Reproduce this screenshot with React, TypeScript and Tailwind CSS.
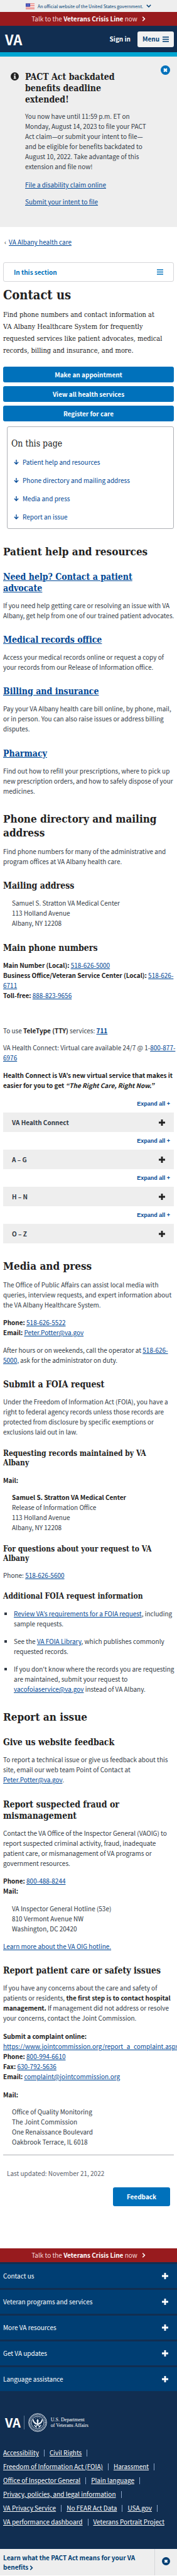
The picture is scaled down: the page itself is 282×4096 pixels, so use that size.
import type { ReactNode } from "react";

const SERIF = "font-['DejaVu_Serif_Condensed','DejaVu_Serif',serif]";

function A({ children, bold }: { children: ReactNode; bold?: boolean }) {
  return (
    <a href="#" className={bold ? "font-bold text-[#004795] underline" : "text-[#004795] underline"}>
      {children}
    </a>
  );
}

function H2({ children, id }: { children: ReactNode; id?: string }) {
  return (
    <h2 id={id} className={`mt-[25px] text-[17px] leading-[22px] font-bold text-[#212121] ${SERIF}`}>
      {children}
    </h2>
  );
}

function H3({ children, gap = "mt-[21px]" }: { children: ReactNode; gap?: string }) {
  return <h3 className={`${gap} text-[14px] leading-[18px] font-bold text-[#212121] ${SERIF}`}>{children}</h3>;
}

function H4({ children, gap = "mt-[19px]" }: { children: ReactNode; gap?: string }) {
  return <h4 className={`${gap} text-[12px] leading-[15px] font-bold text-[#212121] ${SERIF}`}>{children}</h4>;
}

function P({ children, gap = "mt-[11px]" }: { children: ReactNode; gap?: string }) {
  return <p className={`${gap} -mr-[5px]`}>{children}</p>;
}

function Address({ children, gap = "mt-[11px]" }: { children: ReactNode; gap?: string }) {
  return <address className={`${gap} ml-[14px] not-italic`}>{children}</address>;
}

function B({ children }: { children: ReactNode }) {
  return <strong className="font-bold text-[#212121]">{children}</strong>;
}

function Plus({ className }: { className: string }) {
  return (
    <svg viewBox="0 0 10 10" className={`h-[10px] w-[10px] shrink-0 ${className}`} aria-hidden="true">
      <path d="M3.6 0h2.8v3.6H10v2.8H6.4V10H3.6V6.4H0V3.6h3.6z" fill="currentColor" />
    </svg>
  );
}

function Bars({ className }: { className: string }) {
  return (
    <svg viewBox="0 0 10 9" className={`h-[9px] w-[10px] shrink-0 ${className}`} aria-hidden="true">
      <path d="M0 .3h10v1.4H0zM0 3.8h10v1.4H0zM0 7.3h10v1.4H0z" fill="currentColor" />
    </svg>
  );
}

function CloseCircle({ className }: { className: string }) {
  return (
    <svg viewBox="0 0 16 16" className={`shrink-0 ${className}`} aria-hidden="true">
      <circle cx="8" cy="8" r="8" fill="currentColor" />
      <path d="M5.4 5.4l5.2 5.2M10.6 5.4l-5.2 5.2" stroke="#fff" strokeWidth="2.6" />
    </svg>
  );
}

function Chevron({ className }: { className: string }) {
  return (
    <svg viewBox="0 0 6 8" className={`inline-block h-[8px] w-[6px] ${className}`} aria-hidden="true">
      <path d="M1.2 .8L4.4 4 1.2 7.2" fill="none" stroke="currentColor" strokeWidth="1.6" />
    </svg>
  );
}

function Flag() {
  return (
    <svg viewBox="0 0 20 13" className="h-[10px] w-[14px]" aria-hidden="true">
      <rect width="20" height="13" fill="#fff" />
      <path d="M0 0h20v1.6H0zM0 3.6h20v1.6H0zM0 7.4h20V9H0zM0 11.2h20V13H0z" fill="#e0524a" />
      <rect width="10" height="7.4" fill="#2c3fb0" />
      <path
        d="M1.5 1.6h1M4.5 1.6h1M7.5 1.6h1M3 3.6h1M6 3.6h1M1.5 5.6h1M4.5 5.6h1M7.5 5.6h1"
        stroke="#fff"
        strokeWidth="1"
      />
    </svg>
  );
}

function Seal() {
  return (
    <svg viewBox="0 0 60 60" className="h-[30px] w-[30px]" fill="none" stroke="#e8edf3" aria-hidden="true">
      <circle cx="30" cy="30" r="28.5" strokeWidth="2" />
      <circle cx="30" cy="30" r="24.5" strokeWidth="4" strokeDasharray="2 1.6" opacity=".7" />
      <circle cx="30" cy="30" r="20" strokeWidth="1.6" />
      <path d="M15 20c2 9 7 14 13 15M45 20c-2 9-7 14-13 15" strokeWidth="4" />
      <path d="M19 38l8 8M41 38l-8 8M22 44l16-14M38 44L22 30" strokeWidth="2.4" />
      <path d="M30 18l3 5-1 10-2 5-2-5-1-10z" fill="#e8edf3" stroke="none" />
      <path d="M23 17l2-2M29 14h2M35 15l2 2" strokeWidth="2" />
    </svg>
  );
}

function CrisisLine() {
  return (
    <a
      href="#"
      className="flex h-[22px] items-center justify-center gap-[7px] bg-[#981b1e] text-[10px] text-[#f5dcdc]"
    >
      <span>
        Talk to the <strong className="font-bold text-white">Veterans Crisis Line</strong> now
      </span>
      <Chevron className="text-white" />
    </a>
  );
}

function ActionLink({ children }: { children: ReactNode }) {
  return (
    <a
      href="#"
      className="flex h-[25px] items-center justify-center rounded-[3px] bg-[#0071bb] text-[10px] font-bold text-white"
    >
      {children}
    </a>
  );
}

function Accordion({ title }: { title: string }) {
  return (
    <div>
      <div className="flex h-[28px] items-center justify-end pr-[6px]">
        <button
          type="button"
          className="font-['Liberation_Sans',sans-serif] text-[9px] font-bold whitespace-nowrap text-[#004795]"
        >
          Expand all +
        </button>
      </div>
      <button
        type="button"
        className="flex h-[31px] w-full items-center justify-between bg-[#eeeeee] pr-[14px] pl-[14px] font-bold text-[#323a45]"
      >
        {title}
        <Plus className="text-[#212121]" />
      </button>
    </div>
  );
}

const pageLinks = [
  "Patient help and resources",
  "Phone directory and mailing address",
  "Media and press",
  "Report an issue",
];

const footerSections = [
  "Contact us",
  "Veteran programs and services",
  "More VA resources",
  "Get VA updates",
  "Language assistance",
];

const footerLinks = [
  "Accessibility",
  "Civil Rights",
  "Freedom of Information Act (FOIA)",
  "Harassment",
  "Office of Inspector General",
  "Plain language",
  "Privacy, policies, and legal information",
  "VA Privacy Service",
  "No FEAR Act Data",
  "USA.gov",
  "VA performance dashboard",
  "Veterans Portrait Project",
];

export default function App() {
  return (
    <div className="overflow-x-hidden bg-white font-['Noto_Sans_CJK_KR',sans-serif] text-[10px] leading-[16px] text-[#323a45]">
      <header>
        <button
          type="button"
          className="flex h-[19px] w-full items-center justify-center gap-[5px] bg-[#eeeeee] text-[7px] text-[#003e73]"
        >
          <Flag />
          An official website of the United States government.
          <svg viewBox="0 0 8 5" className="h-[5px] w-[8px]" aria-hidden="true">
            <path d="M.8 .8L4 4 7.2 .8" fill="none" stroke="currentColor" strokeWidth="1.5" />
          </svg>
        </button>
        <CrisisLine />
        <div className="flex h-[49px] items-center border-b-[7px] border-[#00a6d2] bg-[#112e51] pr-[5px] pl-[8px]">
          <a href="#" className="text-[22px] leading-[25px] font-bold text-white">
            VA
          </a>
          <button type="button" className="ml-auto font-bold text-white">
            Sign in
          </button>
          <button
            type="button"
            className="ml-[11px] flex h-[25px] w-[58px] items-center justify-center gap-[5px] rounded-[3px] bg-[#f1f1f1] font-bold text-[#003e73]"
          >
            Menu
            <Bars className="" />
          </button>
        </div>
      </header>

      <section className="flex items-start bg-[#eeeeee] pt-[14px] pr-[11px] pb-[32px] pl-[17px]">
        <svg viewBox="0 0 16 16" className="mt-[11px] h-[13px] w-[13px] shrink-0" aria-hidden="true">
          <circle cx="8" cy="8" r="8" fill="#212121" />
          <path d="M6.7 2.8h2.8v2.4H6.7zM6 6.4h3.5v4.4h1.1v1.8H5.8v-1.8h1.1V8.2H6z" fill="#eee" />
        </svg>
        <div className="mt-[9px] mr-[17px] ml-[10px] flex-1">
          <h2 className={`text-[14px] leading-[18px] font-bold text-[#212121] ${SERIF}`}>
            PACT Act backdated
            <br />
            benefits deadline
            <br />
            extended!
          </h2>
          <p className="mt-[10px]">
            You now have until 11:59 p.m. ET on Monday, August 14, 2023 to file your PACT Act claim—or submit your
            intent to file—and be eligible for benefits backdated to August 10, 2022. Take advantage of this extension
            and file now!
          </p>
          <P gap="mt-[13px]">
            <A>File a disability claim online</A>
          </P>
          <P>
            <A>Submit your intent to file</A>
          </P>
        </div>
        <button type="button" aria-label="Close" className="text-[#0071bb]">
          <CloseCircle className="h-[15px] w-[15px]" />
        </button>
      </section>

      <main className="px-[5px]">
        <nav className="mt-[16px] flex gap-[4px] pl-[2px]" aria-label="Breadcrumb">
          <span>‹</span>
          <A>VA Albany health care</A>
        </nav>
        <button
          type="button"
          className="mt-[24px] flex h-[31px] w-full items-center justify-between rounded-[3px] border border-[#d6d7d9] pr-[16px] pl-[16px] font-bold text-[#0071bb]"
        >
          In this section
          <Bars className="" />
        </button>

        <h1 className={`mt-[8px] text-[20px] leading-[26px] font-bold text-[#212121] ${SERIF}`}>Contact us</h1>
        <p className={`mt-[9px] text-[11px] leading-[19px] text-[#212121] ${SERIF}`}>
          Find phone numbers and contact information at
          <br />
          VA Albany Healthcare System for frequently
          <br />
          requested services like patient advocates, medical
          <br />
          records, billing and insurance, and more.
        </p>

        <div className="mt-[16px] grid gap-[6px]">
          <ActionLink>Make an appointment</ActionLink>
          <ActionLink>View all health services</ActionLink>
          <ActionLink>Register for care</ActionLink>
        </div>

        <nav
          className="mt-[8px] ml-[6px] rounded-[3px] border border-[#aeb0b5] px-[6px] pt-[17px] pb-[10px]"
          aria-labelledby="on-this-page"
        >
          <h2 id="on-this-page" className={`text-[14px] leading-[18px] text-[#212121] ${SERIF}`}>
            On this page
          </h2>
          <ul className="mt-[13px] grid gap-[13px] pl-[4px]">
            {pageLinks.map((label) => (
              <li key={label}>
                <a href="#" className="flex items-center gap-[6px] text-[#004795]">
                  <svg viewBox="0 0 8 8" className="h-[8px] w-[8px] shrink-0" aria-hidden="true">
                    <path d="M4 0v6.8M.8 3.8L4 7l3.2-3.2" fill="none" stroke="currentColor" strokeWidth="1.3" />
                  </svg>
                  {label}
                </a>
              </li>
            ))}
          </ul>
        </nav>

        <H2>Patient help and resources</H2>
        <H3 gap="mt-[20px]">
          <A>
            Need help? Contact a patient
            <br />
            advocate
          </A>
        </H3>
        <P>
          If you need help getting care or resolving an issue with VA Albany, get help from one of our trained patient
          advocates.
        </P>
        <H3>
          <A>Medical records office</A>
        </H3>
        <P>Access your medical records online or request a copy of your records from our Release of Information office.</P>
        <H3>
          <A>Billing and insurance</A>
        </H3>
        <P>
          Pay your VA Albany health care bill online, by phone, mail, or in person. You can also raise issues or address
          billing disputes.
        </P>
        <H3 gap="mt-[22px]">
          <A>Pharmacy</A>
        </H3>
        <P>
          Find out how to refill your prescriptions, where to pick up new prescription orders, and how to safely dispose
          of your medicines.
        </P>

        <H2>Phone directory and mailing address</H2>
        <P>Find phone numbers for many of the administrative and program offices at VA Albany health care.</P>
        <H3>Mailing address</H3>
        <Address>
          Samuel S. Stratton VA Medical Center
          <br />
          113 Holland Avenue
          <br />
          Albany, NY 12208
        </Address>
        <H3 gap="mt-[22px]">Main phone numbers</H3>
        <P>
          <B>Main Number (Local):</B> <A>518-626-5000</A>
          <br />
          <B>Business Office/Veteran Service Center (Local):</B> <A>518-626-6711</A>
          <br />
          <B>Toll-free:</B> <A>888-823-9656</A>
        </P>
        <P gap="mt-[40px]">
          To use <B>TeleType (TTY)</B> services: <A bold>711</A>
        </P>
        <P>
          VA Health Connect: Virtual care available 24/7 @ 1-<A>800-877-6976</A>
        </P>
        <P gap="mt-[12px]">
          <B>
            Health Connect is VA’s new virtual service that makes it easier for you to get{" "}
            <em>“The Right Care, Right Now.”</em>
          </B>
        </P>

        <div className="mt-[7px]">
          <Accordion title="VA Health Connect" />
          <Accordion title="A – G" />
          <Accordion title="H – N" />
          <Accordion title="O – Z" />
        </div>

        <H2>Media and press</H2>
        <P>
          The Office of Public Affairs can assist local media with queries, interview requests, and expert information
          about the VA Albany Healthcare System.
        </P>
        <P gap="mt-[12px]">
          <B>Phone:</B> <A>518-626-5522</A>
          <br />
          <B>Email:</B> <A>Peter.Potter@va.gov</A>
        </P>
        <P gap="mt-[12px]">
          After hours or on weekends, call the operator at <A>518-626-5000,</A> ask for the administrator on duty.
        </P>
        <H3>Submit a FOIA request</H3>
        <P>
          Under the Freedom of Information Act (FOIA), you have a right to federal agency records unless those records
          are protected from disclosure by specific exemptions or exclusions laid out in law.
        </P>
        <H4>Requesting records maintained by VA Albany</H4>
        <P gap="mt-[12px]">
          <B>Mail:</B>
        </P>
        <Address>
          <B>Samuel S. Stratton VA Medical Center</B>
          <br />
          Release of Information Office
          <br />
          113 Holland Avenue
          <br />
          Albany, NY 12208
        </Address>
        <H4>For questions about your request to VA Albany</H4>
        <P>
          Phone: <A>518-626-5600</A>
        </P>
        <H4 gap="mt-[18px]">Additional FOIA request information</H4>
        <ul className="mt-[12px] -mr-[5px] grid list-[square] gap-[12px] pl-[17px]">
          <li>
            <A>Review VA’s requirements for a FOIA request</A>, including sample requests.
          </li>
          <li>
            See the <A>VA FOIA Library</A>, which publishes commonly requested records.
          </li>
          <li>
            If you don't know where the records you are requesting are maintained, submit your request to{" "}
            <A>vacofoiaservice@va.gov</A> instead of VA Albany.
          </li>
        </ul>

        <H2>Report an issue</H2>
        <H3 gap="mt-[20px]">Give us website feedback</H3>
        <P>
          To report a technical issue or give us feedback about this site, email our web team Point of Contact at{" "}
          <A>Peter.Potter@va.gov</A>.
        </P>
        <H3 gap="mt-[22px]">Report suspected fraud or mismanagement</H3>
        <P>
          Contact the VA Office of the Inspector General (VAOIG) to report suspected criminal activity, fraud,
          inadequate patient care, or mismanagement of VA programs or government resources.
        </P>
        <P gap="mt-[12px]">
          <B>Phone:</B> <A>800-488-8244</A>
          <br />
          <B>Mail:</B>
        </P>
        <Address gap="mt-[12px]">
          VA Inspector General Hotline (53e)
          <br />
          810 Vermont Avenue NW
          <br />
          Washington, DC 20420
        </Address>
        <P gap="mt-[12px]">
          <A>Learn more about the VA OIG hotline.</A>
        </P>
        <H3>Report patient care or safety issues</H3>
        <P>
          If you have any concerns about the care and safety of patients or residents,{" "}
          <B>the first step is to contact hospital management.</B> If management did not address or resolve your
          concerns, contact the Joint Commission.
        </P>
        <P gap="mt-[13px]">
          <B>Submit a complaint online:</B>
          <br />
          <A>https://www.jointcommission.org/report_a_complaint.aspx</A>
          <br />
          <B>Phone:</B> <A>800-994-6610</A>
          <br />
          <B>Fax:</B> <A>630-792-5636</A>
          <br />
          <B>Email:</B> <A>complaint@jointcommission.org</A>
        </P>
        <P gap="mt-[13px]">
          <B>Mail:</B>
        </P>
        <Address>
          Office of Quality Monitoring
          <br />
          The Joint Commission
          <br />
          One Renaissance Boulevard
          <br />
          Oakbrook Terrace, IL 6018
        </Address>
        <hr className="mt-[12px] border-t border-[#aeb0b5]" />
        <p className="mt-[21px] pl-[6px] text-[#5b616b]">Last updated: November 21, 2022</p>
        <div className="mt-[14px] flex justify-end pr-[6px]">
          <button type="button" className="h-[30px] w-[91px] rounded-[3px] bg-[#0071bb] font-bold text-white">
            Feedback
          </button>
        </div>
      </main>

      <footer className="mt-[67px] bg-[#112e51] text-white">
        <CrisisLine />
        {footerSections.map((title) => (
          <button
            key={title}
            type="button"
            className="mt-[3px] flex h-[38px] w-full items-center justify-between bg-[#003e73] pr-[14px] pl-[5px]"
          >
            {title}
            <Plus className="text-white" />
          </button>
        ))}
        <div className="mt-[35px] flex h-[30px] items-center pl-[8px]">
          <span className="text-[20px] leading-[22px] font-bold">VA</span>
          <span className="ml-[5px] h-[22px] border-l border-[#5b7591]" />
          <span className="ml-[6px]">
            <Seal />
          </span>
          <span className="ml-[6px] font-['Liberation_Serif',serif] text-[8px] leading-[9px]">
            U.S. Department
            <br />
            of Veterans Affairs
          </span>
        </div>
        <ul className="mt-[22px] flex flex-wrap px-[5px] pb-[32px] leading-[22px]">
          {footerLinks.map((label, i) => (
            <li key={label} className="flex items-center">
              <a href="#" className="underline">
                {label}
              </a>
              {i < footerLinks.length - 1 && <span className="mx-[8px] h-[11px] border-l border-[#8ba6ca]" />}
            </li>
          ))}
        </ul>
      </footer>

      <aside className="flex h-[42px] items-stretch bg-[#eeeeee]">
        <a href="#" className="flex-1 pt-[6px] pl-[5px] leading-[15px] font-bold text-[#003e73]">
          Learn what the PACT Act means for your VA
          <br />
          benefits <Chevron className="" />
        </a>
        <button
          type="button"
          aria-label="Dismiss"
          className="flex w-[36px] items-center justify-center border-l border-[#d6d7d9] pb-[4px] text-[#003e73]"
        >
          <CloseCircle className="h-[13px] w-[13px]" />
        </button>
      </aside>
    </div>
  );
}
